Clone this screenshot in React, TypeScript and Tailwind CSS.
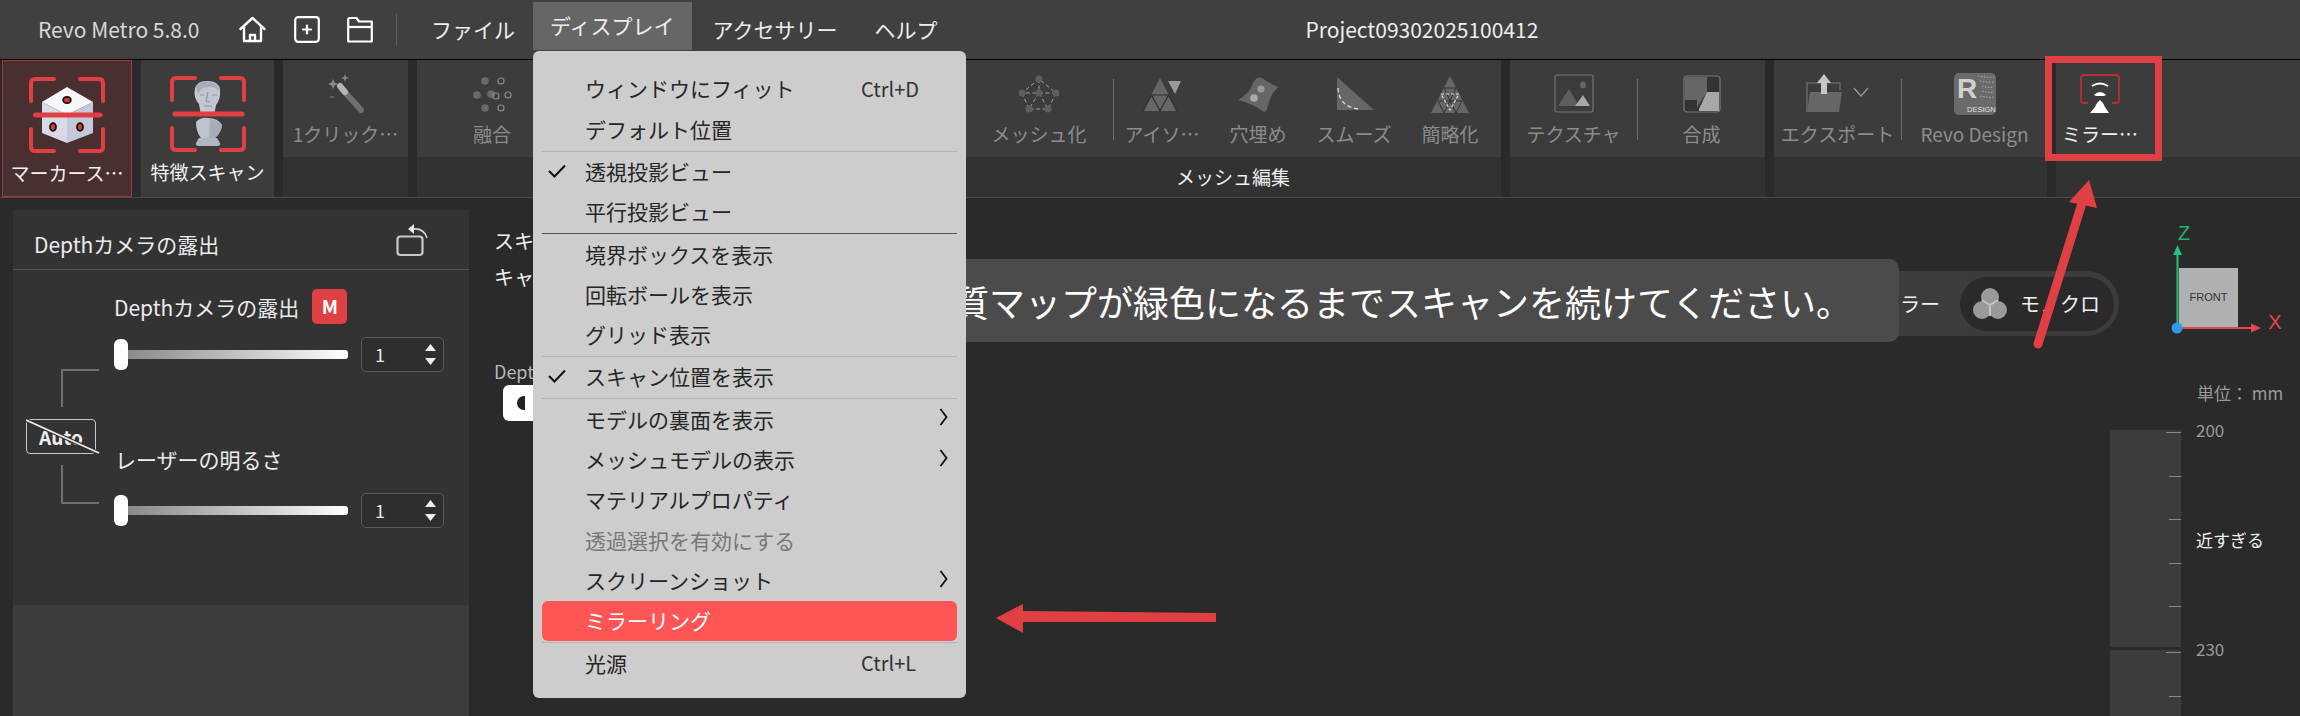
import React from "react";

const RED = "#e04044";

function HomeIcon() {
  return (
    <svg width="27" height="27" viewBox="0 0 27 27" fill="none" stroke="#fff" strokeWidth="2.4" strokeLinejoin="round" strokeLinecap="round">
      <path d="M1.5 13 13.5 2l12 11" />
      <path d="M5 11v14h17V11" />
      <path d="M11 25v-6h5v6" />
    </svg>
  );
}
function PlusIcon() {
  return (
    <svg width="26" height="27" viewBox="0 0 26 27" fill="none" stroke="#fff" strokeWidth="2.2" strokeLinecap="round">
      <rect x="1.2" y="1.2" width="23.6" height="24.6" rx="3" />
      <path d="M13 9.5v8M9 13.5h8" />
    </svg>
  );
}
function FolderIcon() {
  return (
    <svg width="26" height="27" viewBox="0 0 26 27" fill="none" stroke="#fff" strokeWidth="2.2" strokeLinejoin="round">
      <path d="M1.2 3v22.5h23.6V5.5H12L9.5 2H2.2Z" />
      <path d="M1.2 11h23.6" />
    </svg>
  );
}
function Brackets() {
  return (
    <g fill="none" stroke={RED} strokeWidth="4" strokeLinecap="round">
      <path d="M27 4H8Q4 4 4 8V26" />
      <path d="M53 4H72Q76 4 76 8V26" />
      <path d="M4 54V72Q4 76 8 76H27" />
      <path d="M76 54V72Q76 76 72 76H53" />
    </g>
  );
}
function MarkerIcon() {
  return (
    <svg width="80" height="80" viewBox="0 0 80 80">
      <Brackets />
      <path d="M40 12 66 27 40 40 15 27Z" fill="#f7f7f9" />
      <path d="M15 27 40 40V68L15 58Z" fill="#d8dae6" />
      <path d="M66 27 40 40V68L66 58Z" fill="#c6c8da" />
      <ellipse cx="40" cy="25" rx="3.8" ry="3.2" fill="#d8392f" stroke="#111" strokeWidth="1.8" />
      <ellipse cx="26" cy="52" rx="3" ry="3.8" fill="#d8392f" stroke="#111" strokeWidth="1.8" />
      <ellipse cx="53" cy="52" rx="3" ry="3.8" fill="#d8392f" stroke="#111" strokeWidth="1.8" />
      <path d="M8.5 40H73" stroke={RED} strokeWidth="5" strokeLinecap="round" />
    </svg>
  );
}
function BustIcon() {
  return (
    <svg width="80" height="80" viewBox="0 0 80 80">
      <Brackets />
      <path d="M33 42 31 30Q25 24 27 14 30 6 40 7 50 7 52 15 53 25 48 31L46 42Z" fill="#c4c7d2" />
      <path d="M28 13Q33 6 43 8 51 10 51 17 46 12 40 13 33 13 30 20Z" fill="#a9adba" />
      <path d="M40 18 38 27 42 28M36 21H32M44 21H49M36 32H44" stroke="#8f93a3" strokeWidth="1.2" fill="none" />
      <path d="M28 48Q33 43 40 44 50 44 54 51 53 59 47 64H33Q28 58 28 48Z" fill="#c0c3cf" />
      <path d="M42 45Q50 46 54 51 53 59 47 64H41Z" fill="#a9adba" />
      <path d="M31 64H49L52 69Q53 72 49 72H31Q27 72 28 69Z" fill="#b3b6c3" />
      <path d="M7 40H74" stroke={RED} strokeWidth="5" strokeLinecap="round" />
    </svg>
  );
}
function WandIcon() {
  return (
    <svg width="40" height="40" viewBox="0 0 40 40">
      <path d="M16 15 35 36" stroke="#6f6f6f" strokeWidth="6" strokeLinecap="round" />
      <path d="M14 12 19 18" stroke="#b5b5b5" strokeWidth="6" strokeLinecap="round" />
      <path d="M7 5 8.5 8.5 12 10 8.5 11.5 7 15 5.5 11.5 2 10 5.5 8.5Z" fill="#8a8a8a" />
      <path d="M19 0 20 3 23 4 20 5 19 8 18 5 15 4 18 3Z" fill="#8a8a8a" />
      <path d="M4 23H8" stroke="#777" strokeWidth="1.2" />
    </svg>
  );
}
function MergeIcon() {
  return (
    <svg width="40" height="40" viewBox="0 0 40 40">
      {[[13, 7], [5, 21], [19, 20], [13, 34]].map(([x, y]) => (
        <circle key={`${x}-${y}`} cx={x} cy={y} r="3.8" fill="#6a6a6a" />
      ))}
      {[[29, 7], [24, 22], [36, 21], [29, 34]].map(([x, y]) => (
        <circle key={`${x}-${y}`} cx={x} cy={y} r="3" fill="none" stroke="#8f8f8f" strokeWidth="1.2" />
      ))}
    </svg>
  );
}
function MeshIcon() {
  const pts = [[20, 5], [3, 19], [20, 19], [37, 19], [10, 35], [29, 35]];
  return (
    <svg width="40" height="40" viewBox="0 0 40 40">
      <path d="M20 5 3 19H37ZM20 19 10 35H29ZM3 19 10 35M37 19 29 35M20 5V19" fill="none" stroke="#a0a0a0" strokeWidth="1" strokeDasharray="4 2.5" />
      {pts.map(([x, y]) => (
        <circle key={`${x}-${y}`} cx={x} cy={y} r="3.6" fill="#5e5e5e" />
      ))}
    </svg>
  );
}
function IsoIcon() {
  return (
    <svg width="40" height="40" viewBox="0 0 40 40">
      <path d="M18 4 1 37H35Z" fill="#666" />
      <path d="M9.5 21H26.5L18 37ZM9.5 21 1 37M26.5 21 35 37" fill="none" stroke="#2f2f2f" strokeWidth="1.2" />
      <path d="M26 7H39L33 20Z" fill="#9a9a9a" />
    </svg>
  );
}
function FillIcon() {
  return (
    <svg width="42" height="40" viewBox="0 0 42 40">
      <path d="M1 26Q14 18 16 9 20 2 25 4 33 10 41 13 34 20 32 28 30 38 27 38 17 30 1 26Z" fill="#666" />
      <circle cx="24" cy="15" r="3.6" fill="#999" />
      <circle cx="17" cy="24" r="3.8" fill="#aaa" />
    </svg>
  );
}
function SmoothIcon() {
  return (
    <svg width="40" height="40" viewBox="0 0 40 40">
      <path d="M3 3V36H40Z" fill="#666" />
      <path d="M4 14Q5 34 27 35" fill="none" stroke="#ddd" strokeWidth="1.3" strokeDasharray="4 3" />
    </svg>
  );
}
function SimplifyIcon() {
  return (
    <svg width="40" height="40" viewBox="0 0 40 40">
      <path d="M20 2 1 39H39Z" fill="#666" />
      <path d="M14 14H26M8 27H32M14 14 26 39M26 14 14 39M8 27 14 39M32 27 26 39" stroke="#333" strokeWidth="1" fill="none" />
      <path d="M11 20H29L20 36Z" fill="none" stroke="#ddd" strokeWidth="1.2" strokeDasharray="3 2" />
    </svg>
  );
}
function TextureIcon() {
  return (
    <svg width="40" height="40" viewBox="0 0 40 40">
      <rect x="1" y="1" width="38" height="37" rx="2" fill="#3c3c3c" stroke="#757575" strokeWidth="1.2" />
      <path d="M4 32 15 15 25 32Z" fill="#5f5f5f" />
      <path d="M21 32 29 21 36 32Z" fill="#a8a8a8" />
      <ellipse cx="29" cy="11" rx="3" ry="3.5" fill="#666" />
    </svg>
  );
}
function ComposeIcon() {
  return (
    <svg width="38" height="38" viewBox="0 0 38 38">
      <rect x="1" y="1" width="36" height="36" rx="3" fill="#333" stroke="#777" strokeWidth="1.2" />
      <path d="M2 4Q2 2 4 2H24V17L13 34H2Z" fill="#666" />
      <path d="M16 34 24 17H36V36H16Z" fill="#a8a8a8" />
      <path d="M2 34H14V25H2Z" fill="#333" />
    </svg>
  );
}
function ExportIcon() {
  return (
    <svg width="66" height="40" viewBox="0 0 66 40">
      <path d="M2 38V9H16M24 9H35V16" fill="none" stroke="#777" strokeWidth="1.1" />
      <path d="M5 18H37L34 38H2Z" fill="#676767" />
      <path d="M19 0 26 9H22V20H16V9H12Z" fill="#c6c6c6" />
      <path d="M49 14 56 22 63 14" fill="none" stroke="#999" strokeWidth="1.2" />
    </svg>
  );
}
function RevoIcon() {
  return (
    <svg width="42" height="42" viewBox="0 0 42 42" className="-my-px">
      <rect width="42" height="42" rx="5" fill="#6a6a6a" />
      <path d="M24 3Q32 5 40 4M26 8Q33 10 40 9M28 13Q34 15 40 14M28 18Q35 20 40 19M26 23Q35 25 40 24" stroke="#a6a6a6" strokeWidth="1.2" strokeDasharray="1.5 1.5" fill="none" />
      <text x="3" y="25" fontFamily="'Liberation Sans',sans-serif" fontWeight="700" fontSize="28" fill="#d0d0d0">R</text>
      <text x="13" y="39" fontFamily="'Liberation Sans',sans-serif" fontSize="7.5" fill="#e0e0e0">DESIGN</text>
    </svg>
  );
}
function MirrorIcon() {
  return (
    <svg width="40" height="40" viewBox="0 0 40 40">
      <path d="M8 29H4Q1 29 1 26V4Q1 1 4 1H36Q39 1 39 4V26Q39 29 36 29H32" fill="none" stroke="#b23238" strokeWidth="1.8" />
      <path d="M12 12Q20 7 28 12" fill="none" stroke="#fff" strokeWidth="1.8" />
      <path d="M14 21Q20 15 26 21L24 22H16Z" fill="#fff" />
      <path d="M20 26Q23 28 25 33L29 39H10L15 33Q17 28 20 26Z" fill="#fff" />
    </svg>
  );
}
function ResetIcon() {
  return (
    <svg width="34" height="34" viewBox="0 0 34 34" fill="none">
      <rect x="1.5" y="13.5" width="25" height="18.5" rx="3" stroke="#c8c8c8" strokeWidth="2.2" />
      <path d="M17 6Q28 5 31 15" stroke="#d8d8d8" strokeWidth="1.6" />
      <path d="M18 1V11L12 6Z" fill="#e8e8e8" />
    </svg>
  );
}
function Tri({ down = false }: { down?: boolean }) {
  return (
    <svg width="11" height="8" viewBox="0 0 11 8">
      <path d={down ? "M0 1H11L5.5 8Z" : "M5.5 0 11 7H0Z"} fill="#eee" />
    </svg>
  );
}
function Chevron() {
  return (
    <svg width="9" height="18" viewBox="0 0 9 18" fill="none" stroke="#111" strokeWidth="1.8">
      <path d="M1.5 1 7.5 9 1.5 17" />
    </svg>
  );
}
function Check() {
  return (
    <svg width="18" height="14" viewBox="0 0 18 14" fill="none" stroke="#111" strokeWidth="2">
      <path d="M1 7 6.5 12.5 17 1.5" />
    </svg>
  );
}

function Item({ label, w, children, light = false }: { label: string; w: string; children: React.ReactNode; light?: boolean }) {
  return (
    <div className={`flex flex-col items-center pt-[14px] ${w}`}>
      <div className="flex h-[40px] items-center justify-center">{children}</div>
      <div className={`mt-[6px] h-[28px] whitespace-nowrap text-[19px] leading-[28px] ${light ? "text-[#f0f0f0]" : "text-[#8c8c8c]"}`}>{label}</div>
    </div>
  );
}
function VDivider() {
  return <div className="mt-[19px] h-[61px] w-px shrink-0 bg-[#6e6e6e]" />;
}
function Group({ w, title, children }: { w: string; title?: string; children: React.ReactNode }) {
  return (
    <div className={`flex flex-col ${w}`}>
      <div className="flex h-[97px] bg-[#3c3c3c]">{children}</div>
      <div className="flex h-[40px] items-center justify-center bg-[#323232] text-[19px] text-[#f0f0f0]">{title}</div>
    </div>
  );
}
function BigItem({ label, w, className, children }: { label: string; w: string; className: string; children: React.ReactNode }) {
  return (
    <div className={`flex h-[137px] flex-col items-center ${w} ${className}`}>
      <div className="mt-[14px]">{children}</div>
      <div className="mt-[4px] whitespace-nowrap text-[19px] leading-[28px] text-[#f2f2f2]">{label}</div>
    </div>
  );
}
function Slider() {
  return (
    <div className="flex w-[234px] items-center">
      <div className="h-[31px] w-[14px] rounded-[6px] bg-white" />
      <div className="h-[9px] flex-1 rounded-r-[3px] bg-gradient-to-r from-[#8a8a8a] to-white" />
    </div>
  );
}
function Spin() {
  return (
    <div className="ml-[13px] flex h-[35px] w-[83px] items-center justify-between rounded-[5px] border border-[#5a5a5a] bg-[#2e2e2e] pl-[13px] pr-[7px]">
      <span className="text-[18px] text-[#e8e8e8]">1</span>
      <span className="flex flex-col gap-[5px]">
        <Tri />
        <Tri down />
      </span>
    </div>
  );
}

type Row = { t: string; k?: string; c?: boolean; a?: boolean; d?: boolean; hl?: boolean };
const sections: Row[][] = [
  [{ t: "ウィンドウにフィット", k: "Ctrl+D" }, { t: "デフォルト位置" }],
  [{ t: "透視投影ビュー", c: true }, { t: "平行投影ビュー" }],
  [{ t: "境界ボックスを表示" }, { t: "回転ボールを表示" }, { t: "グリッド表示" }],
  [{ t: "スキャン位置を表示", c: true }],
  [
    { t: "モデルの裏面を表示", a: true },
    { t: "メッシュモデルの表示", a: true },
    { t: "マテリアルプロパティ" },
    { t: "透過選択を有効にする", d: true },
    { t: "スクリーンショット", a: true },
    { t: "ミラーリング", hl: true },
  ],
  [{ t: "光源", k: "Ctrl+L" }],
];

function Menu() {
  return (
    <div className="absolute left-[533px] top-[51px] h-[647px] w-[433px] rounded-[6px] bg-[#cdcdcd] px-[9px] pt-[18px] text-[21px] text-[#262626]">
      {sections.map((s, i) => (
        <div key={i} className={i > 0 ? `mt-px border-t ${i === 2 ? "border-[#555]" : "border-[#b4b4b4]"}` : ""}>
          {s.map((r) => (
            <div key={r.t} className={`relative flex h-[40.3px] items-center rounded-[6px] pl-[43px] ${r.hl ? "bg-[#ff5555] text-white" : ""} ${r.d ? "text-[#777]" : ""}`}>
              {r.c && <span className="absolute left-[6px] top-[12px]"><Check /></span>}
              <span>{r.t}</span>
              {r.k && <span className="absolute left-[319px] text-[20px] text-[#333]">{r.k}</span>}
              {r.a && <span className="absolute right-[9px] top-[9px]"><Chevron /></span>}
            </div>
          ))}
        </div>
      ))}
    </div>
  );
}

function Gizmo() {
  return (
    <svg width="120" height="130" viewBox="0 0 120 130" className="ml-[60px] mt-[20px] block">
      <rect x="9" y="50" width="59" height="59" fill="#b0b0b0" />
      <text x="38.5" y="83" textAnchor="middle" fontSize="11" fontFamily="'Liberation Sans',sans-serif" fill="#333">FRONT</text>
      <path d="M7.5 110V36" stroke="#22c27a" strokeWidth="2" />
      <path d="M7.5 27 12 37H3Z" fill="#22c27a" />
      <path d="M8 110H82" stroke="#e8434a" strokeWidth="2" />
      <path d="M91 110 81 105.5V114.5Z" fill="#e8434a" />
      <circle cx="7" cy="110" r="5.5" fill="#2f9be8" />
      <text x="14" y="22" textAnchor="middle" fontSize="20" fontFamily="'Liberation Sans',sans-serif" fill="#22b070">Z</text>
      <text x="105" y="111" textAnchor="middle" fontSize="20" fontFamily="'Liberation Sans',sans-serif" fill="#e8434a">X</text>
    </svg>
  );
}
function Ticks({ longs, n }: { longs: number[]; n: number }) {
  return (
    <div className="flex flex-col items-end gap-[42.5px] pt-[2px]">
      {Array.from({ length: n }).map((_, i) => (
        <div key={i} className={`h-px bg-[#888] ${longs.includes(i) ? "w-[15px]" : "w-[12px]"}`} />
      ))}
    </div>
  );
}

export default function App() {
  return (
    <div className="relative flex h-[716px] w-[2300px] flex-col overflow-hidden bg-[#2a2a2a] [font-family:'Noto_Sans_CJK_JP','Noto_Sans',sans-serif]">
      {/* title bar */}
      <header className="relative flex h-[60px] shrink-0 items-center border-b border-black bg-[#404040] text-[21px] text-[#eee]">
        <span className="ml-[38px] w-[201px] text-[#d8d8d8]">Revo Metro 5.8.0</span>
        <HomeIcon />
        <span className="ml-[28px]"><PlusIcon /></span>
        <span className="ml-[27px]"><FolderIcon /></span>
        <span className="ml-[23px] h-[32px] w-px bg-[#606060]" />
        <span className="ml-[34px]">ファイル</span>
        <span className="ml-[18px] mt-[2px] flex h-[48px] items-center self-start bg-[#666] px-[17px]">ディスプレイ</span>
        <span className="ml-[21px]">アクセサリー</span>
        <span className="ml-[37px]">ヘルプ</span>
        <span className="ml-[368px]">Project09302025100412</span>
      </header>

      {/* ribbon */}
      <section className="flex h-[137px] shrink-0 gap-[9px] pl-[2px]">
        <BigItem label="マーカース…" w="w-[130px]" className="border border-[#a33a3e] bg-[#4a2f30]"><MarkerIcon /></BigItem>
        <BigItem label="特徴スキャン" w="w-[133px]" className="bg-[#3c3c3c]"><BustIcon /></BigItem>
        <Group w="w-[125px]"><Item label="1クリック…" w="w-full"><WandIcon /></Item></Group>
        <Group w="w-[539px]"><Item label="融合" w="w-[150px]"><MergeIcon /></Item></Group>
        <Group w="w-[536px]" title="メッシュ編集">
          <Item label="メッシュ化" w="w-[148px]"><MeshIcon /></Item>
          <VDivider />
          <Item label="アイソ…" w="w-[96px]"><IsoIcon /></Item>
          <Item label="穴埋め" w="w-[96px]"><FillIcon /></Item>
          <Item label="スムーズ" w="w-[96px]"><SmoothIcon /></Item>
          <Item label="簡略化" w="w-[96px]"><SimplifyIcon /></Item>
        </Group>
        <Group w="w-[255px]">
          <Item label="テクスチャ" w="w-[127px]"><TextureIcon /></Item>
          <VDivider />
          <Item label="合成" w="w-[127px]"><ComposeIcon /></Item>
        </Group>
        <Group w="w-[273px]">
          <Item label="エクスポート" w="w-[127px]"><ExportIcon /></Item>
          <VDivider />
          <Item label="Revo Design" w="w-[145px]"><RevoIcon /></Item>
        </Group>
        <Group w="w-[244px]"><Item label="ミラー…" w="w-[88px]" light><MirrorIcon /></Item></Group>
      </section>
      <div className="h-px shrink-0 bg-[#4a4a4a]" />

      {/* body */}
      <main className="flex min-h-0 flex-1">
        {/* left panel */}
        <aside className="ml-[13px] mt-[12px] flex w-[456px] shrink-0 flex-col text-[#ececec]">
          <div className="flex h-[60px] shrink-0 items-center justify-between border-b border-[#555] bg-[#333] pl-[21px] pr-[39px] text-[21px]">
            <span className="mt-[10px]">Depthカメラの露出</span>
            <ResetIcon />
          </div>
          <div className="flex h-[335px] shrink-0 bg-[#333]">
            <div className="w-[101px] shrink-0 pt-[99px]">
              <div className="ml-[48px] h-[38px] w-[38px] rounded-tl-[2px] border-l-2 border-t-2 border-[#707070]" />
              <div className="relative ml-[13px] mt-[12px] flex h-[35px] w-[70px] items-center justify-center rounded-[4px] border border-[#c8c8c8] text-[19px] font-bold leading-none text-[#eee]">
                Auto
                <svg width="74" height="36" viewBox="0 0 74 36" className="absolute -left-px -top-px">
                  <path d="M0 1 73 34" stroke="#333" strokeWidth="4" />
                  <path d="M0 1 73 34" stroke="#eee" strokeWidth="1.6" />
                </svg>
              </div>
              <div className="ml-[48px] mt-[11px] h-[39px] w-[38px] rounded-bl-[2px] border-b-2 border-l-2 border-[#707070]" />
            </div>
            <div className="flex-1 pt-[19px]">
              <div className="flex h-[35px] items-center gap-[13px] text-[21px]">
                <span className="mt-[2px]">Depthカメラの露出</span>
                <span className="flex h-[35px] w-[35px] items-center justify-center rounded-[5px] bg-[#e04044] text-[19px] font-bold text-white">M</span>
              </div>
              <div className="mt-[13px] flex items-center"><Slider /><Spin /></div>
              <div className="mt-[72px] h-[30px] pl-[1px] text-[21px] leading-[30px]">レーザーの明るさ</div>
              <div className="mt-[19px] flex items-center"><Slider /><Spin /></div>
            </div>
          </div>
          <div className="flex-1 bg-[#3c3c3c]" />
        </aside>

        {/* viewport */}
        <div className="relative flex-1 pl-[25px] pt-[28px] text-[20px] text-[#f0f0f0]">
          <div className="h-[30px] leading-[30px]">スキャン</div>
          <div className="mt-[6px] h-[30px] leading-[30px]">キャプチャ</div>
          <div className="mt-[64px] h-[30px] text-[18px] leading-[30px] text-[#b8b8b8]">Depth</div>
          <div className="ml-[9px] -mt-px flex h-[36px] w-[90px] items-center rounded-[6px] bg-white pl-[14px]">
            <span className="h-[14px] w-[8px] rounded-l-full bg-[#222]" />
          </div>

          <div className="absolute -right-[9px] top-[73px] flex h-[65px] w-[240px] items-center justify-end rounded-r-full bg-[#3c3c3c] pr-[5px]">
            <span className="mr-[20px] whitespace-nowrap">カラー</span>
            <div className="flex h-[54px] w-[154px] items-center rounded-full bg-[#2a2a2a] pl-[13px]">
              <svg width="34" height="34" viewBox="0 0 34 34" className="shrink-0">
                <circle cx="17" cy="10" r="9" fill="#9a9a9a" />
                <circle cx="9" cy="23" r="9" fill="#9a9a9a" />
                <circle cx="25" cy="23" r="9" fill="#9a9a9a" />
                <path d="M17 18V29M17 18 9 13M17 18 25 13" stroke="#c4c4c4" strokeWidth="2" fill="none" />
              </svg>
              <span className="ml-[13px] whitespace-nowrap">モノクロ</span>
            </div>
          </div>

          <div className="absolute right-[211px] top-[61px] flex h-[83px] items-center whitespace-nowrap rounded-[10px] bg-[#4b4b4b] pl-[40px] pr-[47px] text-[36px] text-white">
            品質マップが緑色になるまでスキャンを続けてください。
          </div>
        </div>

        {/* right rail */}
        <div className="w-[190px] shrink-0">
          <Gizmo />
          <div className="ml-[87px] mt-[33px] h-[24px] whitespace-nowrap text-[17px] leading-[24px] text-[#9a9a9a]">単位： mm</div>
          <div className="mt-[25px] flex">
            <div className="w-[71px] shrink-0">
              <div className="h-[217px] bg-[#3c3c3c]"><Ticks longs={[0]} n={5} /></div>
              <div className="mt-[3px] h-[70px] bg-[#3c3c3c]"><Ticks longs={[0]} n={2} /></div>
            </div>
            <div className="-mt-[11px] ml-[15px] text-[17px] leading-[22px]">
              <div className="text-[#9a9a9a]">200</div>
              <div className="mt-[88px] text-[#f0f0f0]">近すぎる</div>
              <div className="mt-[87px] text-[#9a9a9a]">230</div>
            </div>
          </div>
        </div>
      </main>

      <Menu />

      {/* annotations */}
      <div className="absolute left-[2045px] top-[56px] h-[105px] w-[117px] border-[7px] border-[#e04044]" />
      <svg width="2300" height="716" viewBox="0 0 2300 716" className="pointer-events-none absolute left-0 top-0">
        <path d="M1216 613 1023 611V604L996 618 1023 633V622L1216 622Z" fill={RED} />
        <path d="M2038 344 2083 200" stroke={RED} strokeWidth="9" strokeLinecap="round" />
        <path d="M2089 180 2069 202 2097 208Z" fill={RED} />
      </svg>
    </div>
  );
}
